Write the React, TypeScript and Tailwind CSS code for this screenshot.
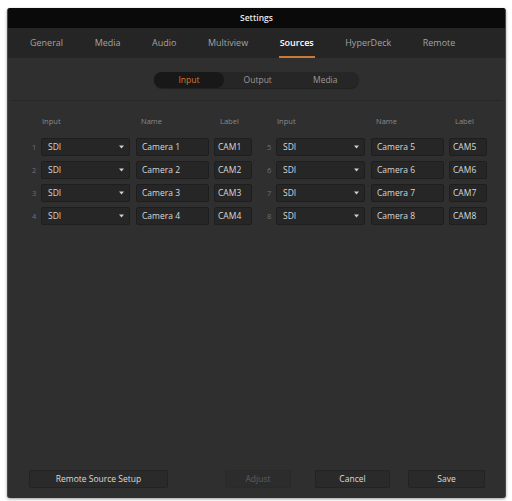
const tabs = ['General', 'Media', 'Audio', 'Multiview', 'Sources', 'HyperDeck', 'Remote'];

const left = [1, 2, 3, 4];
const right = [5, 6, 7, 8];

function SourceRow({ n }: { n: number }) {
  return (
    <div className="flex h-[18px] items-center text-[8.5px]">
      <span className="w-[9px] text-[7.5px] text-[#707070]">{n}</span>
      <div className="flex h-full w-[89px] items-center justify-between rounded-[2px] border border-[#1e1e1e] bg-[#262626] pl-[6px] pr-[5px] text-[#d8d8d8]">
        <span>SDI</span>
        <svg width="5" height="4" viewBox="0 0 5 4" className="fill-[#d0d0d0]">
          <path d="M0 0.5 H5 L2.5 3.5 Z" />
        </svg>
      </div>
      <div className="ml-[6px] flex h-full w-[73px] items-center rounded-[2px] border border-[#1e1e1e] bg-[#262626] pl-[5px] text-[#d8d8d8]">
        Camera {n}
      </div>
      <div className="ml-[5px] flex h-full w-[38px] items-center rounded-[2px] border border-[#1e1e1e] bg-[#262626] pl-[3px] text-[#d8d8d8]">
        CAM{n}
      </div>
    </div>
  );
}

function Group({ ids }: { ids: number[] }) {
  return (
    <div className="flex flex-col">
      <div className="mb-[11px] flex text-[7.5px] text-[#8a8a8a]">
        <span className="ml-[10px] w-[99px]">Input</span>
        <span className="w-[79px]">Name</span>
        <span>Label</span>
      </div>
      <div className="flex flex-col gap-[5px]">
        {ids.map((n) => (
          <SourceRow key={n} n={n} />
        ))}
      </div>
    </div>
  );
}

export default function App() {
  return (
    <div
      className="h-[501px] w-[512px] bg-white pb-[3px] pl-[7px] pr-[6px] pt-[8px] text-[8px]"
      style={{ fontFamily: '"Open Sans", "Liberation Sans", sans-serif' }}
    >
      <div className="flex h-full flex-col overflow-hidden rounded-[3px] border-x border-[#4a4a4a] bg-[#2f2f2f] shadow-[0_1px_3px_rgba(0,0,0,0.4)]">
        {/* title */}
        <div className="flex h-[20px] items-center justify-center bg-[#0a0a0a] text-[8.5px] font-semibold text-[#e8e8e8]">
          Settings
        </div>

        {/* tabs */}
        <div className="flex h-[30px] items-stretch gap-[29.5px] bg-[#252525] pl-[21px] text-[9px] text-[#a3a3a3]">
          {tabs.map((t) => (
            <div
              key={t}
              className={
                t === 'Sources'
                  ? 'flex items-center border-b-2 border-[#c87a3a] px-[1px] pt-[2px] font-semibold text-white'
                  : 'flex items-center px-[1px]'
              }
            >
              {t}
            </div>
          ))}
        </div>

        {/* segment */}
        <div className="mt-[14px] flex justify-center">
          <div className="flex h-[16px] w-[205px] rounded-[8px] bg-[#262626] text-[8.5px] text-[#9a9a9a] shadow-[0_1px_1px_rgba(0,0,0,0.3)]">
            <div className="flex w-[70px] items-center justify-center rounded-[8px] bg-[#181818] text-[#d9782f]">
              Input
            </div>
            <div className="flex flex-1 items-center justify-center">Output</div>
            <div className="flex flex-1 items-center justify-center">Media</div>
          </div>
        </div>

        {/* table panel */}
        <div className="mx-[3px] mt-[12px] border-t border-[#272727] pt-[15px]">
          <div className="flex gap-[15px] pl-[21px]">
            <Group ids={left} />
            <Group ids={right} />
          </div>
        </div>

        <div className="flex-1" />

        {/* footer buttons */}
        <div className="mb-[10px] flex items-center pl-[21px] text-[8.5px]">
          <div className="flex h-[18px] w-[139px] items-center justify-center rounded-[2px] border border-[#232323] bg-[#2a2a2a] text-[#dcdcdc]">
            Remote Source Setup
          </div>
          <div className="ml-[57px] flex h-[18px] w-[66px] items-center justify-center rounded-[2px] border border-[#2a2a2a] bg-[#2c2c2c] text-[#5f5f5f]">
            Adjust
          </div>
          <div className="ml-[24px] flex h-[18px] w-[75px] items-center justify-center rounded-[2px] border border-[#232323] bg-[#2a2a2a] text-[#dcdcdc]">
            Cancel
          </div>
          <div className="ml-[18px] flex h-[18px] w-[77px] items-center justify-center rounded-[2px] border border-[#232323] bg-[#2a2a2a] text-[#dcdcdc]">
            Save
          </div>
        </div>
      </div>
    </div>
  );
}
